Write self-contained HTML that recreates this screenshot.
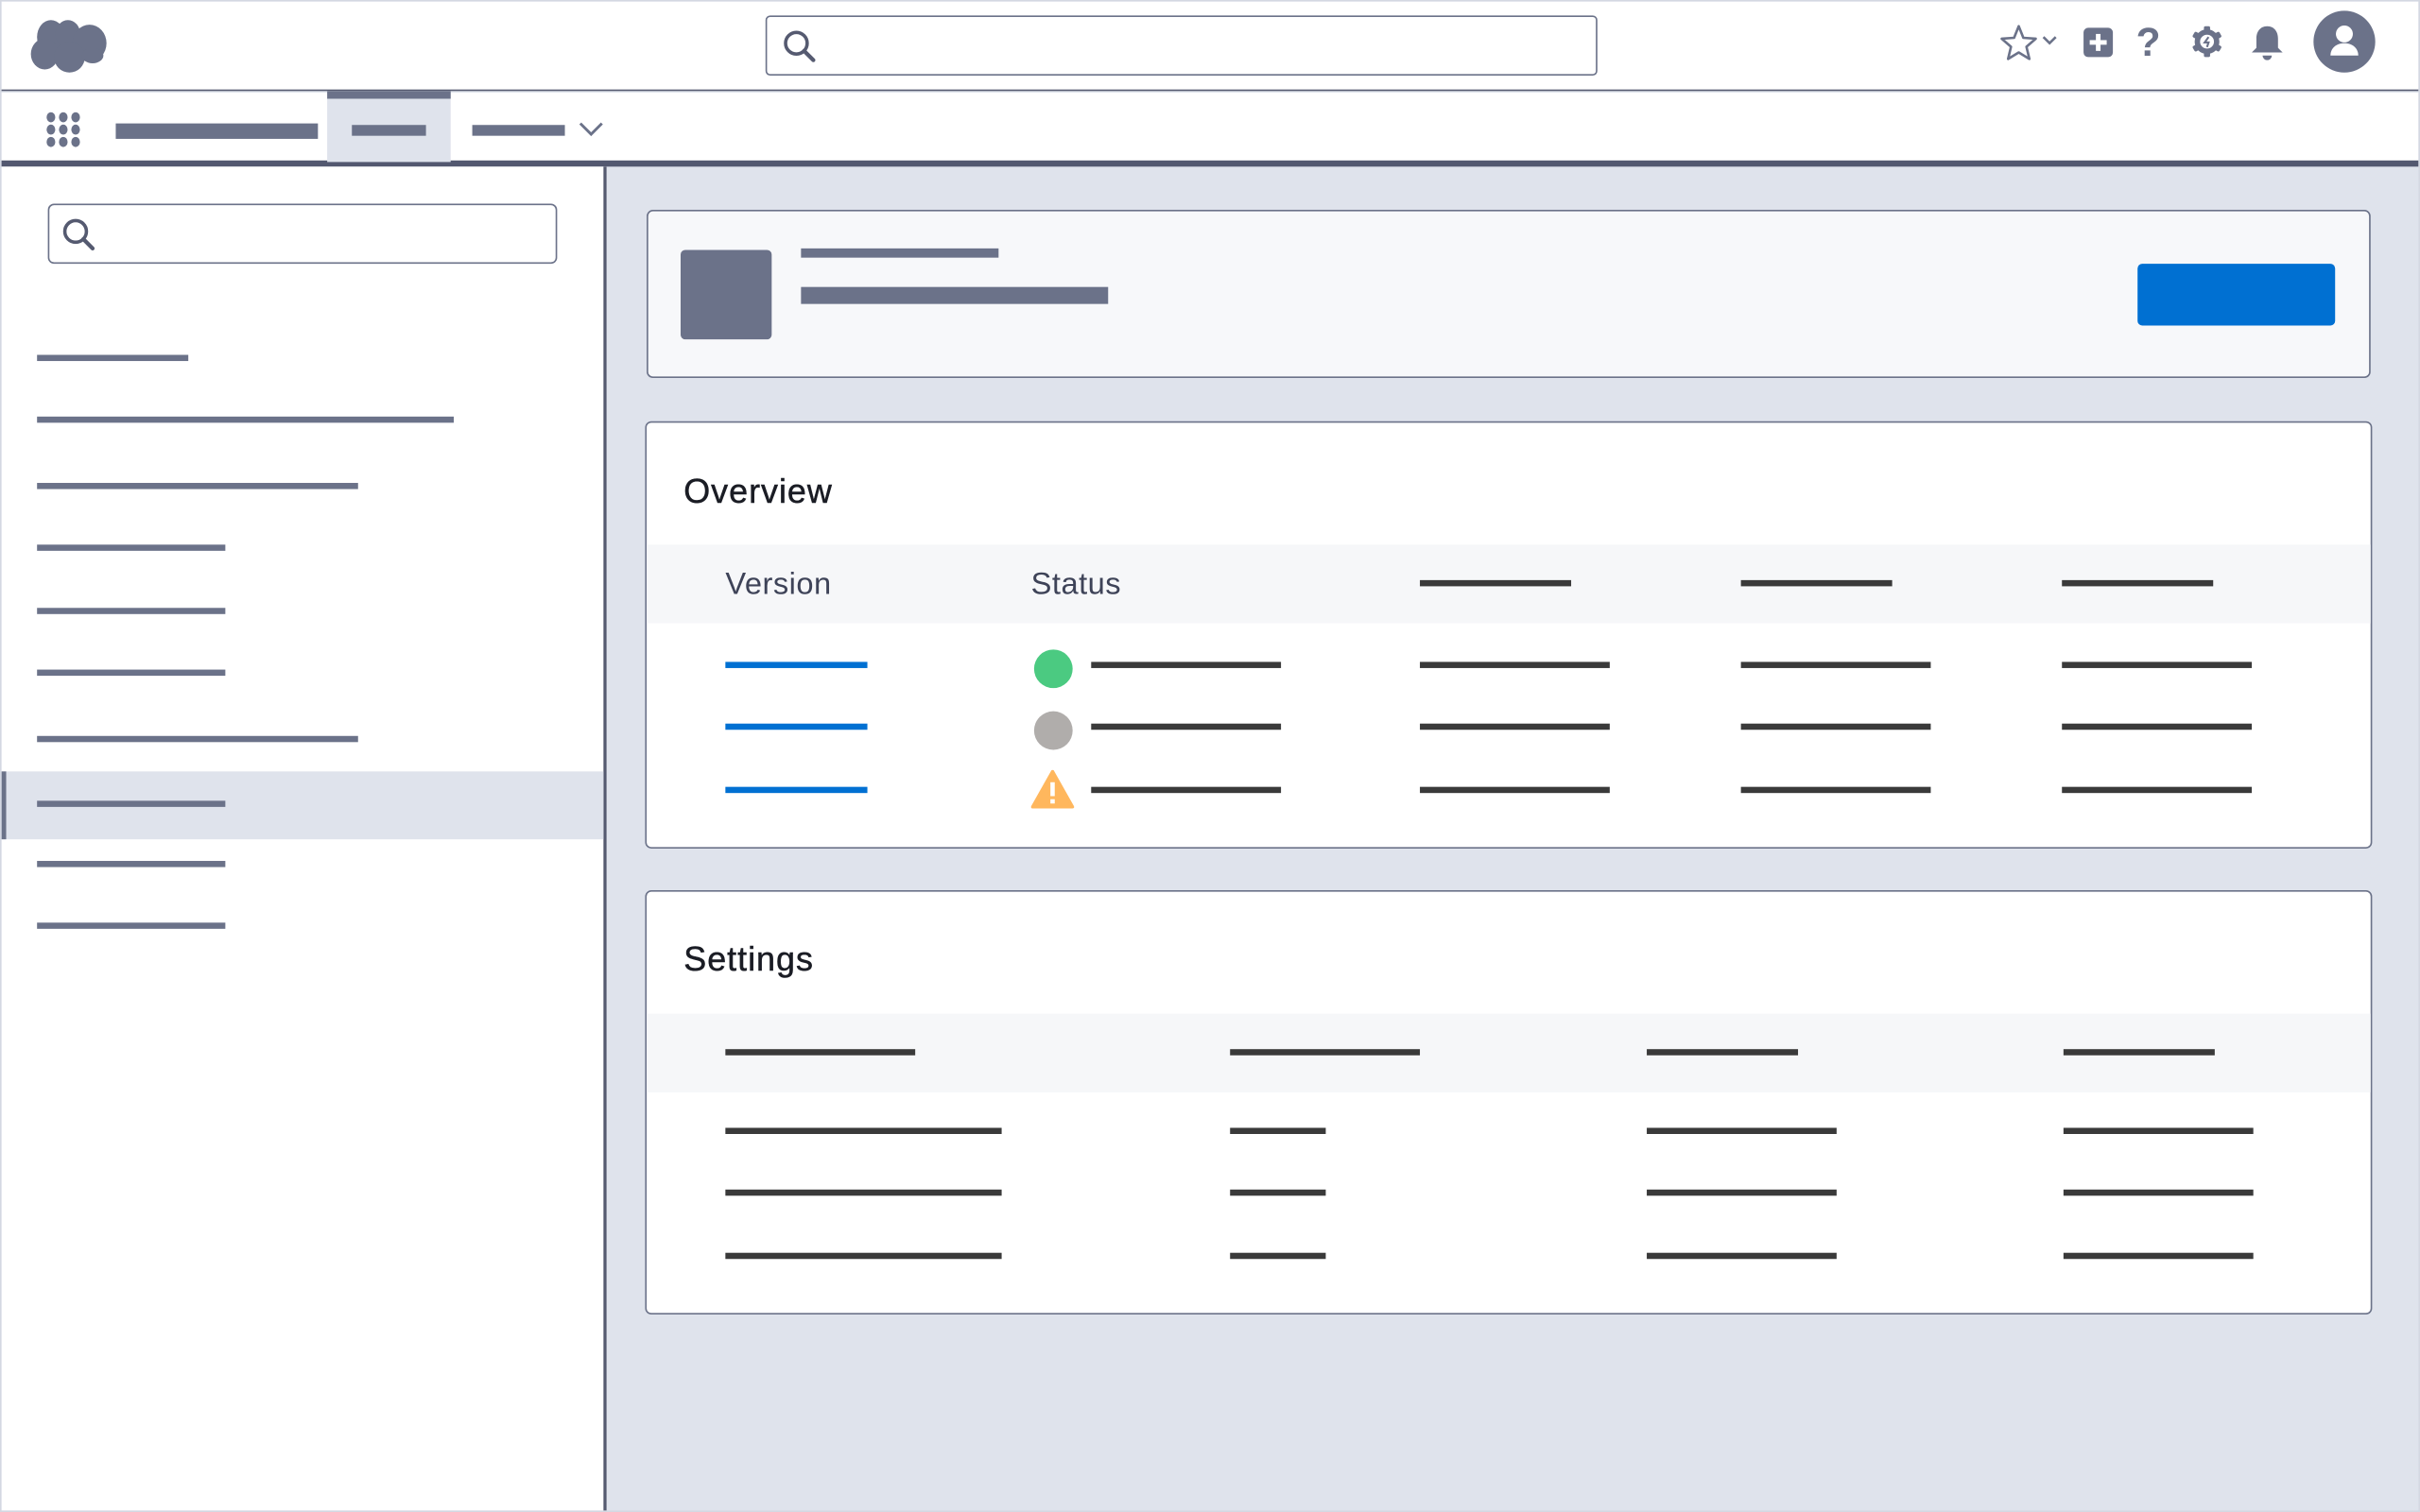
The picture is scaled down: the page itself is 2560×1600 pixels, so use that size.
<!DOCTYPE html>
<html><head><meta charset="utf-8"><style>
*{margin:0;padding:0;box-sizing:border-box}
body{width:2560px;height:1600px;overflow:hidden;background:#fff;font-family:"Liberation Sans",sans-serif}
#w{position:absolute;left:0;top:0;width:1568px;height:980px;transform:scale(1.632653);transform-origin:0 0;background:#dfe3ec}
.a{position:absolute}
.g{background:#6b7289}
.k{background:#3a3a3a}
.b{background:#0070d2}
.t{position:absolute;font-size:22px;color:#1a1c24;letter-spacing:0.6px;-webkit-text-stroke:0.3px #1a1c24}
.h{position:absolute;font-size:20px;color:#3e4358;top:368px;letter-spacing:0.3px}
</style></head><body><div id="w">
<div class="a" style="left:0;top:0;width:1567px;height:59px;background:#fff;border-bottom:1px solid #555a70"></div>
<svg class="a" style="left:18px;top:11px" width="54" height="38" viewBox="0 0 54 38"><g fill="#6b7289"><ellipse cx="15" cy="13" rx="9" ry="11"/><ellipse cx="26" cy="11" rx="8" ry="9"/><ellipse cx="40" cy="17" rx="11" ry="12"/><ellipse cx="11" cy="24" rx="9" ry="10"/><ellipse cx="27" cy="26" rx="10" ry="10"/><ellipse cx="42" cy="25" rx="7" ry="5"/></g></svg>
<div class="a" style="left:496px;top:10px;width:539px;height:39px;border:1px solid #6b7289;border-radius:3px;background:#fff"></div>
<svg class="a" style="left:506px;top:18px" width="24" height="24" viewBox="0 0 24 24"><circle cx="10" cy="10" r="7" fill="none" stroke="#555a70" stroke-width="2.2"/><path d="M15 15l6 6" stroke="#555a70" stroke-width="2.6" stroke-linecap="round"/></svg>
<svg class="a" style="left:1295px;top:15px" width="44" height="26" viewBox="0 0 44 26"><path d="M13 2l3 7.5 8 .6-6 5.2 1.9 7.9L13 19l-6.9 4.2L8 15.3 2 10.1l8-.6z" fill="none" stroke="#6b7289" stroke-width="1.6" stroke-linejoin="round"/><path d="M29 9l4 4 4-4" fill="none" stroke="#6b7289" stroke-width="1.6"/></svg>
<div class="a g" style="left:1350px;top:18px;width:19px;height:19px;border-radius:3px"></div>
<div class="a" style="left:1358px;top:22px;width:3px;height:11px;background:#fff"></div>
<div class="a" style="left:1354px;top:26px;width:11px;height:3px;background:#fff"></div>
<div class="a" style="left:1384px;top:12px;font-size:26px;font-weight:bold;color:#6b7289">?</div>
<svg class="a" style="left:1419px;top:16px" width="22" height="22" viewBox="0 0 22 22"><g fill="#6b7289"><circle cx="11" cy="11" r="8"/><rect x="9" y="1" width="4" height="20" rx="1"/><rect x="9" y="1" width="4" height="20" rx="1" transform="rotate(60 11 11)"/><rect x="9" y="1" width="4" height="20" rx="1" transform="rotate(120 11 11)"/></g><circle cx="11" cy="11" r="4.5" fill="#fff"/><path d="M12 8l-2.5 3.5h2.5l-1 3" stroke="#6b7289" stroke-width="1.3" fill="none"/></svg>
<svg class="a" style="left:1458px;top:16px" width="22" height="24" viewBox="0 0 22 24"><path d="M11 1c-4.5 0-7 3.5-7 8v6l-3 3h20l-3-3V9c0-4.5-2.5-8-7-8z" fill="#6b7289"/><path d="M8 20h6a3 3 0 0 1-6 0z" fill="#6b7289"/></svg>
<svg class="a" style="left:1498px;top:6px" width="42" height="42" viewBox="0 0 42 42"><circle cx="21" cy="21" r="20" fill="#6b7289"/><circle cx="21" cy="16" r="5.5" fill="#fff"/><path d="M12 30c0-5 4-8 9-8s9 3 9 8z" fill="#fff"/></svg>
<div class="a" style="left:0;top:60px;width:1567px;height:45px;background:#fff"></div>
<div class="a" style="left:0;top:104px;width:1567px;height:4px;background:#535870"></div>
<svg class="a" style="left:29px;top:72px" width="26" height="26" viewBox="0 0 26 26"><g fill="#6b7289"><ellipse cx="4" cy="4" rx="2.8" ry="3.3"/><ellipse cx="12" cy="4" rx="2.8" ry="3.3"/><ellipse cx="20" cy="4" rx="2.8" ry="3.3"/><ellipse cx="4" cy="12" rx="2.8" ry="3.3"/><ellipse cx="12" cy="12" rx="2.8" ry="3.3"/><ellipse cx="20" cy="12" rx="2.8" ry="3.3"/><ellipse cx="4" cy="20" rx="2.8" ry="3.3"/><ellipse cx="12" cy="20" rx="2.8" ry="3.3"/><ellipse cx="20" cy="20" rx="2.8" ry="3.3"/></g></svg>
<div class="a g" style="left:75px;top:80px;width:131px;height:10px"></div>
<div class="a" style="left:212px;top:59px;width:80px;height:46px;background:#dfe3ec;border-top:5px solid #6b7289"></div>
<div class="a g" style="left:228px;top:81px;width:48px;height:7px"></div>
<div class="a g" style="left:306px;top:81px;width:60px;height:7px"></div>
<svg class="a" style="left:375px;top:78px" width="16" height="12" viewBox="0 0 16 12"><path d="M1 2l7 7 7-7" fill="none" stroke="#6b7289" stroke-width="1.8"/></svg>
<div class="a" style="left:0;top:108px;width:393px;height:872px;background:#fff;border-right:2px solid #555a70"></div>
<div class="a" style="left:31px;top:132px;width:330px;height:39px;border:1px solid #6b7289;border-radius:4px"></div>
<svg class="a" style="left:39px;top:140px" width="24" height="24" viewBox="0 0 24 24"><circle cx="10" cy="10" r="7" fill="none" stroke="#555a70" stroke-width="2.2"/><path d="M15 15l6 6" stroke="#555a70" stroke-width="2.6" stroke-linecap="round"/></svg>
<div class="a" style="left:1px;top:500px;width:390px;height:44px;background:#dfe3ec;border-left:3px solid #6b7289"></div>
<div class="a g" style="left:24px;top:230px;width:98px;height:4px"></div>
<div class="a g" style="left:24px;top:270px;width:270px;height:4px"></div>
<div class="a g" style="left:24px;top:313px;width:208px;height:4px"></div>
<div class="a g" style="left:24px;top:353px;width:122px;height:4px"></div>
<div class="a g" style="left:24px;top:394px;width:122px;height:4px"></div>
<div class="a g" style="left:24px;top:434px;width:122px;height:4px"></div>
<div class="a g" style="left:24px;top:477px;width:208px;height:4px"></div>
<div class="a g" style="left:24px;top:519px;width:122px;height:4px"></div>
<div class="a g" style="left:24px;top:558px;width:122px;height:4px"></div>
<div class="a g" style="left:24px;top:598px;width:122px;height:4px"></div>
<div class="a" style="left:419px;top:136px;width:1117px;height:109px;background:#f7f8fa;border:1px solid #6b7289;border-radius:4px"></div>
<div class="a g" style="left:441px;top:162px;width:59px;height:58px;border-radius:3px"></div>
<div class="a g" style="left:519px;top:161px;width:128px;height:6px"></div>
<div class="a g" style="left:519px;top:186px;width:199px;height:11px"></div>
<div class="a b" style="left:1385px;top:171px;width:128px;height:40px;border-radius:3px"></div>
<div class="a" style="left:418px;top:273px;width:1119px;height:277px;background:#fff;border:1px solid #6b7289;border-radius:4px;overflow:hidden"><div class="a" style="left:0;top:79px;width:1119px;height:51px;background:#f6f7f9"></div></div>
<div class="t" style="left:443px;top:306px">Overview</div>
<div class="h" style="left:470px">Version</div>
<div class="h" style="left:668px">Status</div>
<div class="a k" style="left:920px;top:376px;width:98px;height:4px"></div>
<div class="a k" style="left:1128px;top:376px;width:98px;height:4px"></div>
<div class="a k" style="left:1336px;top:376px;width:98px;height:4px"></div>
<div class="a b" style="left:470px;top:429px;width:92px;height:4px"></div>
<div class="a b" style="left:470px;top:469px;width:92px;height:4px"></div>
<div class="a b" style="left:470px;top:510px;width:92px;height:4px"></div>
<div class="a" style="left:670px;top:421px;width:25px;height:25px;border-radius:50%;background:#4bca81"></div>
<div class="a" style="left:670px;top:461px;width:25px;height:25px;border-radius:50%;background:#b0adab"></div>
<svg class="a" style="left:668px;top:499px" width="28" height="26" viewBox="0 0 28 26"><path d="M14 1L27 24H1z" fill="#ffb75d" stroke="#ffb75d" stroke-linejoin="round" stroke-width="2"/><rect x="12.6" y="8" width="2.8" height="9" fill="#fff"/><rect x="12.6" y="19" width="2.8" height="2.8" fill="#fff"/></svg>
<div class="a k" style="left:707px;top:429px;width:123px;height:4px"></div>
<div class="a k" style="left:707px;top:469px;width:123px;height:4px"></div>
<div class="a k" style="left:707px;top:510px;width:123px;height:4px"></div>
<div class="a k" style="left:920px;top:429px;width:123px;height:4px"></div>
<div class="a k" style="left:920px;top:469px;width:123px;height:4px"></div>
<div class="a k" style="left:920px;top:510px;width:123px;height:4px"></div>
<div class="a k" style="left:1128px;top:429px;width:123px;height:4px"></div>
<div class="a k" style="left:1128px;top:469px;width:123px;height:4px"></div>
<div class="a k" style="left:1128px;top:510px;width:123px;height:4px"></div>
<div class="a k" style="left:1336px;top:429px;width:123px;height:4px"></div>
<div class="a k" style="left:1336px;top:469px;width:123px;height:4px"></div>
<div class="a k" style="left:1336px;top:510px;width:123px;height:4px"></div>
<div class="a" style="left:418px;top:577px;width:1119px;height:275px;background:#fff;border:1px solid #6b7289;border-radius:4px;overflow:hidden"><div class="a" style="left:0;top:79px;width:1119px;height:51px;background:#f6f7f9"></div></div>
<div class="t" style="left:443px;top:609px">Settings</div>
<div class="a k" style="left:470px;top:680px;width:123px;height:4px"></div>
<div class="a k" style="left:797px;top:680px;width:123px;height:4px"></div>
<div class="a k" style="left:1067px;top:680px;width:98px;height:4px"></div>
<div class="a k" style="left:1337px;top:680px;width:98px;height:4px"></div>
<div class="a k" style="left:470px;top:731px;width:179px;height:4px"></div>
<div class="a k" style="left:470px;top:771px;width:179px;height:4px"></div>
<div class="a k" style="left:470px;top:812px;width:179px;height:4px"></div>
<div class="a k" style="left:797px;top:731px;width:62px;height:4px"></div>
<div class="a k" style="left:797px;top:771px;width:62px;height:4px"></div>
<div class="a k" style="left:797px;top:812px;width:62px;height:4px"></div>
<div class="a k" style="left:1067px;top:731px;width:123px;height:4px"></div>
<div class="a k" style="left:1067px;top:771px;width:123px;height:4px"></div>
<div class="a k" style="left:1067px;top:812px;width:123px;height:4px"></div>
<div class="a k" style="left:1337px;top:731px;width:123px;height:4px"></div>
<div class="a k" style="left:1337px;top:771px;width:123px;height:4px"></div>
<div class="a k" style="left:1337px;top:812px;width:123px;height:4px"></div>
<div class="a" style="left:0;top:0;width:1568px;height:980px;border:1px solid #d4d8e2;pointer-events:none"></div>
</div></body></html>
